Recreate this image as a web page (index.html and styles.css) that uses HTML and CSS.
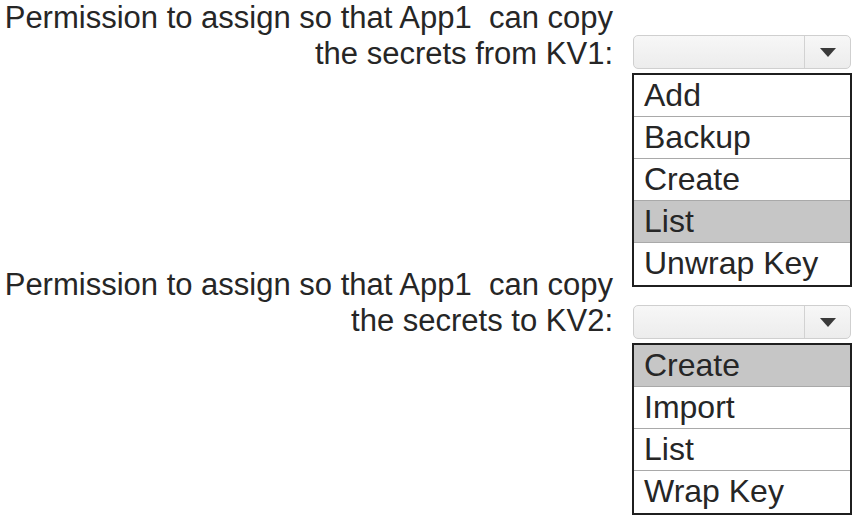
FILE: index.html
```html
<!DOCTYPE html>
<html lang="en">
<head>
    <meta charset="UTF-8">
    <title>Key Vault permissions</title>
    <link rel="stylesheet" href="styles.css">
</head>
<body>
    <div class="answer-area">
        <div class="labels">
            <p class="label">Permission to assign so that App1&nbsp; can copy<br>the secrets from KV1:</p>
            <p class="label label-second">Permission to assign so that App1&nbsp; can copy<br>the secrets to KV2:</p>
        </div>

        <div class="controls">
            <div class="dropdown">
                <span class="dropdown-value"></span>
                <span class="dropdown-arrow"></span>
            </div>
            <ul class="options">
                <li>Add</li>
                <li>Backup</li>
                <li>Create</li>
                <li class="selected">List</li>
                <li>Unwrap Key</li>
            </ul>

            <div class="dropdown dropdown-second">
                <span class="dropdown-value"></span>
                <span class="dropdown-arrow"></span>
            </div>
            <ul class="options">
                <li class="selected">Create</li>
                <li>Import</li>
                <li>List</li>
                <li>Wrap Key</li>
            </ul>
        </div>
    </div>
</body>
</html>
```

FILE: styles.css
```css
* {
    margin: 0;
    padding: 0;
    box-sizing: border-box;
}

body {
    font-family: 'Liberation Sans', Arial, sans-serif;
    background: #fff;
    color: #262626;
    overflow: hidden;
}

.answer-area {
    display: flex;
    align-items: flex-start;
}

.labels {
    width: 613px;
    text-align: right;
}

.label {
    font-size: 31px;
    line-height: 36px;
}

.label-second {
    margin-top: 195px;
}

.controls {
    width: 220px;
    margin-left: 19px;
    padding-top: 35px;
}

.dropdown {
    display: flex;
    height: 34px;
    margin: 0 1px 0 1px;
    border: 1px solid #cfcfcf;
    border-radius: 5px;
    background: linear-gradient(#f7f7f7, #ececec);
}

.dropdown-value {
    flex: 1;
    border-right: 1px solid #d2d2d2;
}

.dropdown-arrow {
    width: 45px;
    display: flex;
    align-items: center;
    justify-content: center;
}

.dropdown-arrow::before {
    content: "";
    border-left: 8px solid transparent;
    border-right: 8px solid transparent;
    border-top: 9px solid #3a3a3a;
}

.options {
    list-style: none;
    margin-top: 4px;
    border: 2px solid #1f1f1f;
    background: #fff;
}

.options li {
    height: 42px;
    padding-left: 10px;
    font-size: 32px;
    line-height: 40px;
    border-bottom: 1px solid #a9a9a9;
}

.options li:last-child {
    border-bottom: none;
}

.options li.selected {
    background: #c6c6c6;
}

.dropdown-second {
    margin-top: 18px;
}
```
